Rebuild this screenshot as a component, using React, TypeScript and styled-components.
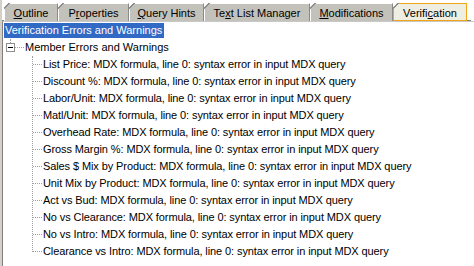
import { createGlobalStyle } from 'styled-components';
import styled from 'styled-components';

const GlobalStyle = createGlobalStyle`
  html, body {
    margin: 0;
    padding: 0;
    background: #ffffff;
  }
`;

const Frame = styled.div`
  width: 472px;
  height: 266px;
  overflow: hidden;
  border-left: 2px solid #d4d0c8;
  background: #ffffff;
  font-family: 'Liberation Sans', Arial, sans-serif;
  font-size: 11px;
  color: #000000;
`;

const TabStrip = styled.div`
  display: flex;
  height: 21px;
  box-sizing: border-box;
  padding: 3px 0 0 2px;
  border-bottom: 1px solid #808080;
  margin-right: 3px;
`;

const Tab = styled.div<{ $w: number; $active?: boolean }>`
  position: relative;
  box-sizing: border-box;
  width: ${(p) => p.$w}px;
  height: 18px;
  line-height: 18px;
  text-align: center;
  white-space: nowrap;
  background: ${(p) => (p.$active ? '#efeee2' : '#c3c2ba')};
  border: 1px solid ${(p) => (p.$active ? '#f2a516' : '#ffffff')};
  border-right-color: ${(p) => (p.$active ? '#f2a516' : '#8a8a8a')};
  border-bottom: ${(p) => (p.$active ? '1px solid #f2a516' : 'none')};
  clip-path: polygon(4px 0, 100% 0, 100% 100%, 0 100%, 0 4px);

  &::before {
    content: '';
    position: absolute;
    left: -1px;
    top: -1px;
    width: 6px;
    height: 6px;
    background: linear-gradient(
      135deg,
      #ffffff 0,
      #ffffff 3.2px,
      #8c8c8c 3.2px,
      #8c8c8c 4.4px,
      transparent 4.4px
    );
  }

  u {
    text-decoration: underline;
    text-underline-offset: 1px;
  }
`;

const TreePanel = styled.div`
  border-left: 1px solid #808080;
  border-top: 1px solid #c8c8c8;
  height: 244px;
`;

const Row = styled.div`
  position: relative;
  height: 17px;
  line-height: 17px;
  white-space: nowrap;
`;

const HeaderLabel = styled.span`
  display: inline-block;
  margin: 1px 0 0 1px;
  height: 15px;
  line-height: 15px;
  padding: 0 2px 0 1px;
  background: #316ac5;
  color: #ffffff;
  vertical-align: top;
`;

const GroupRow = styled(Row)`
  padding-left: 22px;

  &::before {
    content: '';
    position: absolute;
    left: 7px;
    top: 0;
    height: 4px;
    border-left: 1px dotted #a0a0a0;
  }

  &::after {
    content: '';
    position: absolute;
    left: 12px;
    top: 8px;
    width: 9px;
    border-top: 1px dotted #a0a0a0;
  }
`;

const ExpandBox = styled.span`
  position: absolute;
  left: 3px;
  top: 4px;
  width: 9px;
  height: 9px;
  box-sizing: border-box;
  border: 1px solid #8e8e8e;
  background: #ffffff;

  &::after {
    content: '';
    position: absolute;
    left: 1px;
    top: 3px;
    width: 5px;
    height: 1px;
    background: #000000;
  }
`;

const ChildList = styled.div`
  position: relative;

  &::before {
    content: '';
    position: absolute;
    left: 29px;
    top: 0;
    bottom: 8px;
    border-left: 1px dotted #a0a0a0;
  }
`;

const ChildRow = styled(Row)`
  padding-left: 40px;
  letter-spacing: -0.1px;

  &::before {
    content: '';
    position: absolute;
    left: 30px;
    top: 8px;
    width: 9px;
    border-top: 1px dotted #a0a0a0;
  }
`;

const tabs = [
  { w: 54, pre: '', key: 'O', post: 'utline' },
  { w: 71, pre: 'P', key: 'r', post: 'operties' },
  { w: 75, pre: '', key: 'Q', post: 'uery Hints' },
  { w: 106, pre: 'Te', key: 'x', post: 't List Manager' },
  { w: 83, pre: '', key: 'M', post: 'odifications' },
  { w: 74, pre: 'Verifi', key: 'c', post: 'ation', active: true },
];

const members = [
  'List Price',
  'Discount %',
  'Labor/Unit',
  'Matl/Unit',
  'Overhead Rate',
  'Gross Margin %',
  'Sales $ Mix by Product',
  'Unit Mix by Product',
  'Act vs Bud',
  'No vs Clearance',
  'No vs Intro',
  'Clearance vs Intro',
];

export default function App() {
  return (
    <>
      <GlobalStyle />
      <Frame>
        <TabStrip>
          {tabs.map((t) => (
            <Tab key={t.post} $w={t.w} $active={t.active}>
              {t.pre}
              <u>{t.key}</u>
              {t.post}
            </Tab>
          ))}
        </TabStrip>
        <TreePanel>
          <Row>
            <HeaderLabel>Verification Errors and Warnings</HeaderLabel>
          </Row>
          <GroupRow>
            <ExpandBox />
            Member Errors and Warnings
          </GroupRow>
          <ChildList>
            {members.map((m) => (
              <ChildRow key={m}>
                {m}: MDX formula, line 0: syntax error in input MDX query
              </ChildRow>
            ))}
          </ChildList>
        </TreePanel>
      </Frame>
    </>
  );
}
